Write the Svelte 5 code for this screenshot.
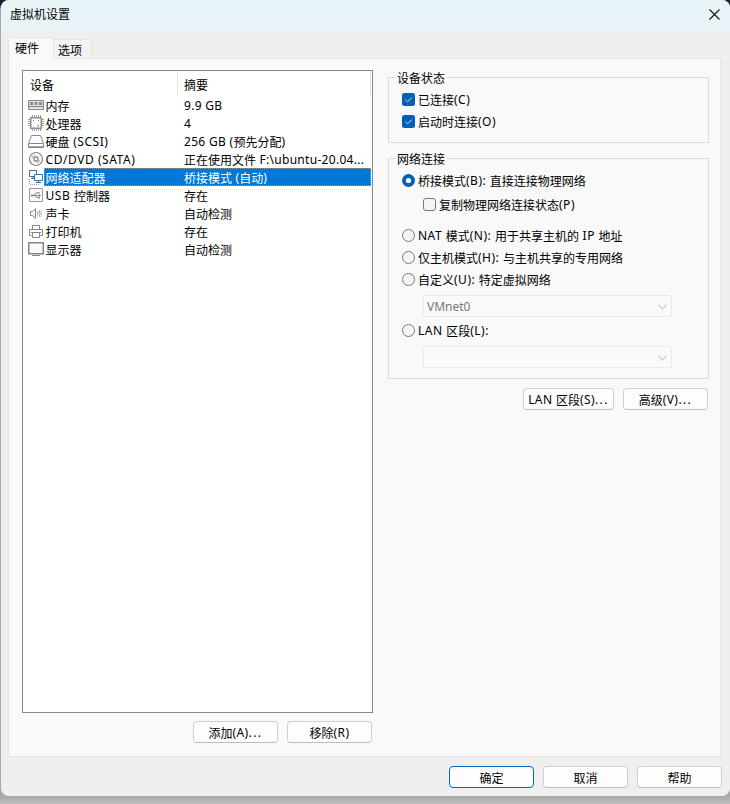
<script>
  const devices = [
    { icon: 'memory', name: '内存', summary: '9.9 GB' },
    { icon: 'cpu', name: '处理器', summary: '4' },
    { icon: 'disk', name: '硬盘 (SCSI)', summary: '256 GB (预先分配)' },
    { icon: 'cd', name: 'CD/DVD (SATA)', summary: '正在使用文件 F:\\ubuntu-20.04...' },
    { icon: 'net', name: '网络适配器', summary: '桥接模式 (自动)' },
    { icon: 'usb', name: 'USB 控制器', summary: '存在' },
    { icon: 'sound', name: '声卡', summary: '自动检测' },
    { icon: 'printer', name: '打印机', summary: '存在' },
    { icon: 'display', name: '显示器', summary: '自动检测' }
  ];
  let selected = $state(4);

  // Latin runs get their own tracking, ideographs keep the full 12px cell.
  const runs = (text) => text.match(/\.{3}|(?:(?!\.{3})[\x20-\x7e])+|[^\x20-\x7e]+/g) ?? [];
  const kind = (run) => (run === '...' ? 'latin dots' : /^[\x20-\x7e]/.test(run) ? 'latin' : 'han');
</script>

{#snippet label(text)}{#each runs(text) as run}<span class={kind(run)}>{run}</span>{/each}{/snippet}

{#snippet check(on)}
  <svg class="mark" width="13" height="13" viewBox="0 0 13 13">
    {#if on}
      <rect width="13" height="13" rx="2.5" fill="#005fb8" />
      <path d="M3.4 6.7 5.6 8.8 9.8 4.6" fill="none" stroke="#d6e8f7" stroke-width="1" />
    {:else}
      <rect x=".5" y=".5" width="12" height="12" rx="2.5" fill="#f5f5f5" stroke="#777" />
    {/if}
  </svg>
{/snippet}

{#snippet radio(on)}
  <svg class="mark" width="13" height="13" viewBox="0 0 13 13">
    {#if on}
      <circle cx="6.5" cy="6.5" r="6.5" fill="#005fb8" />
      <circle cx="6.5" cy="6.5" r="2.6" fill="#fff" />
    {:else}
      <circle cx="6.5" cy="6.5" r="6" fill="#f4f4f4" stroke="#777" />
    {/if}
  </svg>
{/snippet}

{#snippet chevron()}
  <svg class="chevron" width="9" height="6" viewBox="0 0 9 6"><path d="M.5 1 4.5 4.8 8.5 1" fill="none" stroke="#a8a8a8" /></svg>
{/snippet}

{#snippet deviceIcon(kind)}
  <svg class="icon" width="16" height="18" viewBox="0 0 16 18" fill="none" stroke="#868686">
    {#if kind === 'memory'}
      <path d="M.5 4.5h15v9H.5z" fill="#dedede" />
      <path d="M2 6h3v3H2zM6.5 6h3v3h-3zM11 6h3v3h-3z" fill="#8e8e8e" stroke="none" />
      <path d="M1 10.5h14" />
      <path d="M2 12.5h3M6 12.5h5M12 12.5h2" stroke="#eee" />
    {:else if kind === 'cpu'}
      <rect x="2.75" y="3.75" width="10.5" height="10.5" stroke-width="1.5" stroke="#909090" />
      <path stroke="#a0a0a0" d="M4.5 1v2M6.5 1v2M8.5 1v2M10.5 1v2M12.5 1v2M4.5 15v2M6.5 15v2M8.5 15v2M10.5 15v2M12.5 15v2M0 5.5h2M0 7.5h2M0 9.5h2M0 11.5h2M14 5.5h2M14 7.5h2M14 9.5h2M14 11.5h2" />
      <path d="M5 6h1v1H5zM10 6h1v1h-1zM9.5 11h1.5v1.5H9.5z" fill="#868686" stroke="none" />
    {:else if kind === 'disk'}
      <path d="M3.5 3.5h9l3 8v4H.5v-4z" fill="#fff" />
      <path d="M1 11.5h14" />
      <path d="M1 15h14" stroke-width="1.5" />
    {:else if kind === 'cd'}
      <circle cx="8" cy="9" r="6.5" fill="#f7f7f7" stroke-width="1.2" />
      <circle cx="8" cy="9" r="2" fill="#fff" stroke-width="1.3" />
      <path d="M4.2 8A4 4 0 0 1 7 5.2M11.8 10A4 4 0 0 1 9 12.8" stroke="#aaa" />
    {:else if kind === 'net'}
      <g stroke="#3c719b">
        <path d="M1.5 2.5h7v6h-7z" fill="#fff" />
        <path d="M3 10.5h4M5 9v2" />
        <path d="M6.5 6.5h8v6h-8z" fill="#fff" />
        <path d="M8 14.5h5M10.5 13v2" />
        <path d="M1.5 11v6M2 16.5h9" stroke-dasharray="1 1" stroke="#84a4bd" />
      </g>
    {:else if kind === 'usb'}
      <rect x="1.5" y="2.5" width="13" height="13" rx=".5" fill="#fafafa" stroke="#999" />
      <path d="M4 9.5h8M6 9.5l1.5-2.5H10M7 9.5l1.5 2H11" />
      <path d="M3 8.5h2v2H3zM10 6h1.5v1.5H10zM10.5 11h1.5v1.5h-1.5zM11 8l2 1.5-2 1.5z" fill="#868686" stroke="none" />
    {:else if kind === 'sound'}
      <path d="M2.5 7.5h2l3-2.8v9.6l-3-2.8h-2z" fill="#fff" />
      <path d="M9.5 7.5q1 2 0 4M11.3 6.3q1.6 3.2 0 6.4" stroke="#999" />
      <path d="M12.8 5.5q1.5 4 0 8" stroke="#ccc" />
    {:else if kind === 'printer'}
      <path d="M4.5 7.5v-4h7v4" />
      <path d="M3.5 13.5h-2v-6h13v6h-2" />
      <path d="M4.5 10.5h7v5h-7zM3 10.5h10" fill="#fff" />
    {:else}
      <rect x=".75" y="2.75" width="14.5" height="11" fill="#fafafa" stroke-width="1.5" />
      <path d="M4 15.5h8" />
    {/if}
  </svg>
{/snippet}

<div class="desktop">
  <div class="window">
    <header>
      <span class="title">虚拟机设置</span>
      <svg width="11" height="11" viewBox="0 0 11 11"><path d="M.5.5 10.5 10.5M10.5.5.5 10.5" stroke="#111" stroke-width="1.1" /></svg>
    </header>

    <nav>
      <span class="tab active">硬件</span>
      <span class="tab">选项</span>
    </nav>

    <main>
      <section class="left">
        <div class="list">
          <div class="head"><span class="h1">设备</span><span class="h2">摘要</span></div>
          {#each devices as d, i}
            <div class="row" class:selected={selected === i} role="option" aria-selected={selected === i} tabindex="-1" onmousedown={() => (selected = i)}>
              {@render deviceIcon(d.icon)}
              <div class="cells">
                <span class="name">{@render label(d.name)}</span>
                <span class="summary">{@render label(d.summary)}</span>
              </div>
            </div>
          {/each}
        </div>
        <div class="actions">
          <button>{@render label('添加(A)...')}</button>
          <button>{@render label('移除(R)')}</button>
        </div>
      </section>

      <section class="right">
        <div class="group status">
          <h2>设备状态</h2>
          <div class="opt">{@render check(true)}<span class="text">{@render label('已连接(C)')}</span></div>
          <div class="opt">{@render check(true)}<span class="text">{@render label('启动时连接(O)')}</span></div>
        </div>
        <div class="group network">
          <h2>网络连接</h2>
          <div class="opt">{@render radio(true)}<span class="text">{@render label('桥接模式(B): 直接连接物理网络')}</span></div>
          <div class="opt sub">{@render check(false)}<span class="text">{@render label('复制物理网络连接状态(P)')}</span></div>
          <div class="opt">{@render radio(false)}<span class="text">{@render label('NAT 模式(N): 用于共享主机的 IP 地址')}</span></div>
          <div class="opt">{@render radio(false)}<span class="text">{@render label('仅主机模式(H): 与主机共享的专用网络')}</span></div>
          <div class="opt">{@render radio(false)}<span class="text">{@render label('自定义(U): 特定虚拟网络')}</span></div>
          <div class="combo"><span>VMnet0</span>{@render chevron()}</div>
          <div class="opt lan">{@render radio(false)}<span class="text">{@render label('LAN 区段(L):')}</span></div>
          <div class="combo"><span></span>{@render chevron()}</div>
        </div>
        <div class="actions">
          <button class="wide">{@render label('LAN 区段(S)...')}</button>
          <button>{@render label('高级(V)...')}</button>
        </div>
      </section>
    </main>

    <footer>
      <button class="primary">确定</button>
      <button>取消</button>
      <button>帮助</button>
    </footer>
  </div>
</div>

<style>
  * { box-sizing: border-box; }
  .desktop {
    width: 730px;
    height: 804px;
    padding-left: 1px;
    overflow: hidden;
    background: linear-gradient(#1c1f22 0, #1c1f22 5px, #a9a9a9 9px, #a9a9a9 796px, #ababab 797px, #bdbdbd 804px);
    font: 12px/18px "Noto Sans", "Noto Sans CJK SC", sans-serif;
    color: #000;
  }
  .latin {
    letter-spacing: .4px;
    line-height: 1;
    vertical-align: 1px;
    white-space: pre;
  }
  .name .latin { letter-spacing: .55px; }
  .summary .latin { letter-spacing: .3px; }
  .text .latin { letter-spacing: .5px; }
  button .dots { letter-spacing: 1.4px; }
  .window {
    width: 729px;
    height: 796px;
    display: flex;
    flex-direction: column;
    background: #efefef;
    border-radius: 8px;
    overflow: hidden;
  }
  header {
    height: 30px;
    flex: none;
    display: flex;
    align-items: center;
    justify-content: space-between;
    padding: 0 10px 2px 9px;
    background: #e9f4f9;
  }
  .title { padding-top: 1px; }
  nav {
    height: 28px;
    flex: none;
    display: flex;
    align-items: flex-end;
    padding-left: 7px;
  }
  .tab {
    width: 38px;
    height: 19px;
    padding-left: 4px;
    border: 1px solid #e5e5e5;
    border-left: 0;
    border-bottom: 0;
    background: #f3f3f3;
    line-height: 21px;
  }
  .tab.active {
    width: 46px;
    height: 22px;
    margin-bottom: -1px;
    padding-left: 6px;
    position: relative;
    border-left: 1px solid #e5e5e5;
    background: #f9f9f9;
    line-height: 21px;
  }
  main {
    width: 713px;
    height: 699px;
    flex: none;
    margin-left: 7px;
    display: flex;
    padding: 11px 11px 0 13px;
    gap: 15px;
    background: #f9f9f9;
    border: 1px solid #e5e5e5;
  }
  .left { width: 351px; }
  .list {
    height: 643px;
    background: #fff;
    border: 1px solid #828790;
    padding-top: 1px;
  }
  .head {
    height: 24px;
    margin-right: 1px;
    display: flex;
    line-height: 27px;
    border-right: 1px solid #e5e5e5;
  }
  .h1 { width: 155px; padding-left: 7px; border-right: 1px solid #e5e5e5; }
  .h2 { padding-left: 6px; }
  .row { height: 18px; display: flex; padding-left: 5px; white-space: nowrap; }
  .icon { flex: none; }
  .cells {
    flex: 1;
    display: flex;
    height: 18px;
    margin-right: 1px;
    border: 1px dotted transparent;
    line-height: 19px;
  }
  .selected .cells { background: #0078d7; border-color: #e08a3c; color: #fff; }
  .name { width: 139px; padding-left: .5px; }
  .actions { display: flex; justify-content: flex-end; gap: 9px; padding: 8px 1px 0 0; }
  button {
    width: 85px;
    height: 22px;
    padding: 1px 0 0;
    font: inherit;
    line-height: 22px;
    color: #000;
    background: #fdfdfd;
    border: 1px solid #d0d0d0;
    border-bottom-color: #bcbcbc;
    border-radius: 4px;
    white-space: nowrap;
  }
  button.wide { width: 91px; }
  button.primary { border-color: #0067c0; }
  .right { width: 321px; padding-top: 7px; }
  .right .actions { padding: 9px 1px 0 0; }
  .group { border: 1px solid #dcdcdc; padding-left: 13px; white-space: nowrap; }
  .group h2 {
    width: max-content;
    height: 18px;
    margin: -9px 0 2px -7px;
    padding: 0 2px;
    background: #f9f9f9;
    font: inherit;
    line-height: 19px;
  }
  .status { height: 66px; }
  .network { height: 221px; margin-top: 15px; }
  .opt { height: 22px; display: flex; align-items: center; gap: 3px; }
  .text { line-height: 22px; padding-top: 2px; }
  .mark { flex: none; margin-bottom: 1px; }
  .opt.sub { margin: 2px 0 9px 21px; }
  .combo {
    width: 249px;
    height: 22px;
    margin: 4px 0 0 21px;
    padding: 0 4px 0 3px;
    display: flex;
    align-items: center;
    justify-content: space-between;
    border: 1px solid #e9e9e9;
    border-radius: 2px;
    background: #fafafa;
    color: #787878;
  }
  .combo span { padding-top: 1px; }
  .chevron { margin-top: 2px; }
  .opt.lan { margin-top: 3px; }
  footer {
    display: flex;
    justify-content: flex-end;
    gap: 9px;
    padding: 9px 8px 0 0;
  }
</style>
